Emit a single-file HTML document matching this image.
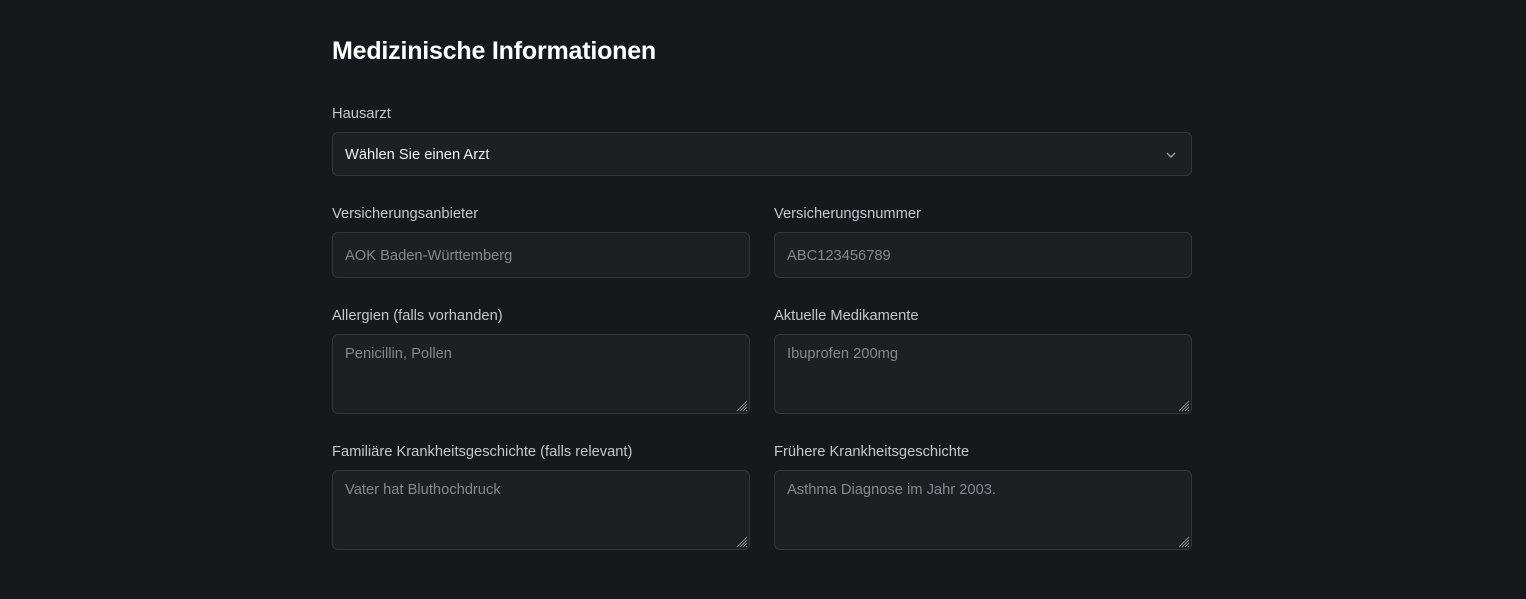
<!DOCTYPE html>
<html><head><style>
body{margin:0;background:#17181c;font-family:"Liberation Sans",sans-serif;width:1526px;height:599px;overflow:hidden;position:relative}
.a{position:absolute}
h1{position:absolute;left:332px;top:37px;margin:0;font-size:25px;font-weight:bold;color:#fff;letter-spacing:-0.2px}
.l{position:absolute;font-size:14.7px;color:#c4c6cc}
.b{position:absolute;box-sizing:border-box;background:#1e1f23;border:1px solid #33353a;border-radius:6px;font-size:14.7px;color:#85878d;padding-left:12px}
.rs{position:absolute;right:1px;bottom:1px}
</style></head><body>
<h1>Medizinische Informationen</h1>
<div class="l" style="left:332px;top:106px">Hausarzt</div>
<div class="b" style="left:332px;top:132px;width:860px;height:44px;line-height:44px;color:#f0f0f2">Wählen Sie einen Arzt
<svg class="a" style="right:14px;top:17px" width="12" height="10" viewBox="0 0 12 10"><path d="M2 3l4 4 4-4" fill="none" stroke="#9a9ca2" stroke-width="1.4"/></svg></div>
<div class="l" style="left:332px;top:206px">Versicherungsanbieter</div>
<div class="l" style="left:774px;top:206px">Versicherungsnummer</div>
<div class="b" style="left:332px;top:232px;width:418px;height:46px;line-height:46px">AOK Baden-Württemberg</div>
<div class="b" style="left:774px;top:232px;width:418px;height:46px;line-height:46px">ABC123456789</div>
<div class="l" style="left:332px;top:308px">Allergien (falls vorhanden)</div>
<div class="l" style="left:774px;top:308px">Aktuelle Medikamente</div>
<div class="b" style="left:332px;top:334px;width:418px;height:80px;padding-top:11px">Penicillin, Pollen<svg class="rs" width="12" height="12"><path d="M11 1L1 11M11 4L4 11M11 7L7 11M11 10L10 11" stroke="#888" stroke-width="1"/></svg></div>
<div class="b" style="left:774px;top:334px;width:418px;height:80px;padding-top:11px">Ibuprofen 200mg<svg class="rs" width="12" height="12"><path d="M11 1L1 11M11 4L4 11M11 7L7 11M11 10L10 11" stroke="#888" stroke-width="1"/></svg></div>
<div class="l" style="left:332px;top:444px">Familiäre Krankheitsgeschichte (falls relevant)</div>
<div class="l" style="left:774px;top:444px">Frühere Krankheitsgeschichte</div>
<div class="b" style="left:332px;top:470px;width:418px;height:80px;padding-top:11px">Vater hat Bluthochdruck<svg class="rs" width="12" height="12"><path d="M11 1L1 11M11 4L4 11M11 7L7 11M11 10L10 11" stroke="#888" stroke-width="1"/></svg></div>
<div class="b" style="left:774px;top:470px;width:418px;height:80px;padding-top:11px">Asthma Diagnose im Jahr 2003.<svg class="rs" width="12" height="12"><path d="M11 1L1 11M11 4L4 11M11 7L7 11M11 10L10 11" stroke="#888" stroke-width="1"/></svg></div>
</body></html>
